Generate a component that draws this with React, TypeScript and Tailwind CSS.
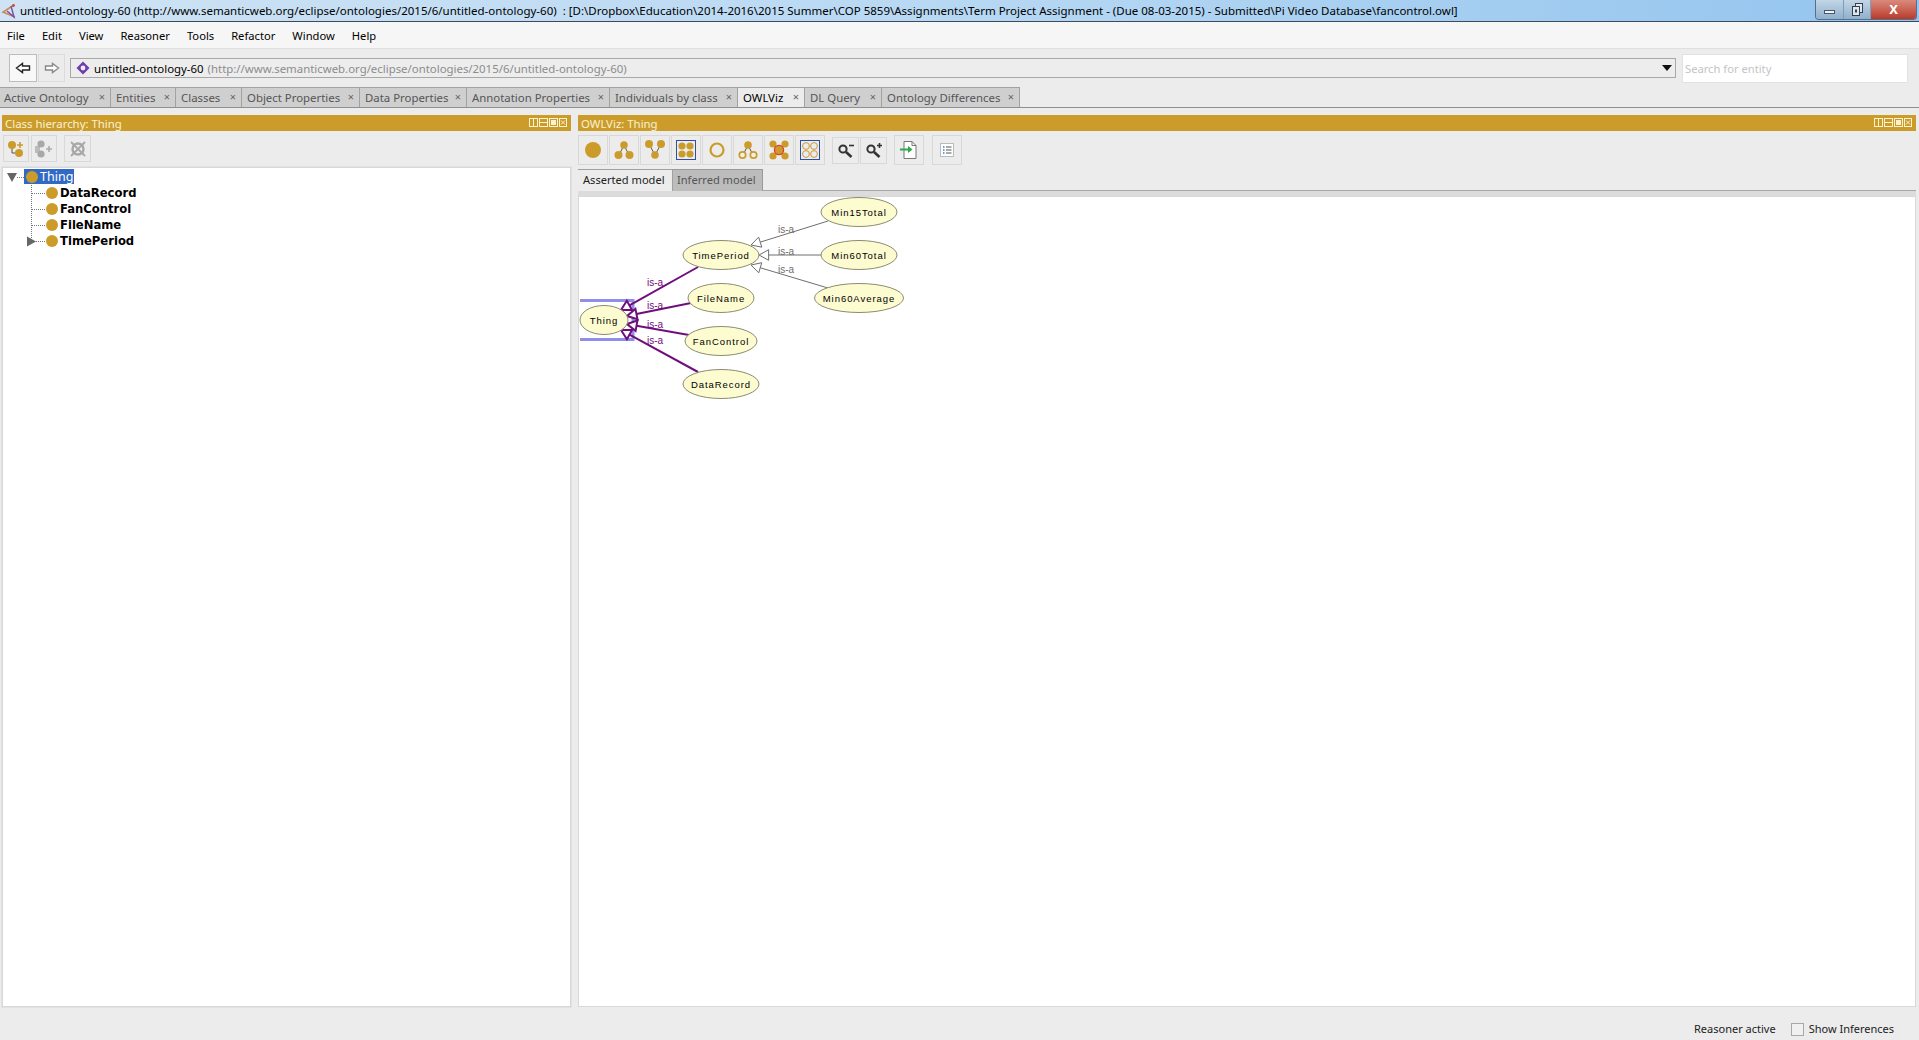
import type { ReactNode } from 'react';

const GOLD = '#cc9c2b';

const menus = ['File', 'Edit', 'View', 'Reasoner', 'Tools', 'Refactor', 'Window', 'Help'];

const tabs = [
  { label: 'Active Ontology', width: 'w-[111px]' },
  { label: 'Entities', width: 'w-[65px]' },
  { label: 'Classes', width: 'w-[66px]' },
  { label: 'Object Properties', width: 'w-[118px]' },
  { label: 'Data Properties', width: 'w-[107px]' },
  { label: 'Annotation Properties', width: 'w-[143px]' },
  { label: 'Individuals by class', width: 'w-[128px]' },
  { label: 'OWLViz', width: 'w-[67px]', active: true },
  { label: 'DL Query', width: 'w-[77px]' },
  { label: 'Ontology Differences', width: 'w-[138px]' },
];

function PanelButtons() {
  return (
    <svg width="38" height="10" viewBox="0 0 38 10" fill="none" stroke="#fdf3d0" strokeWidth="1">
      <rect x="0.5" y="0.5" width="8" height="8" />
      <path d="M4.5 0.5V8.5" />
      <rect x="10.5" y="0.5" width="8" height="8" />
      <path d="M10.5 4.5H18.5" />
      <rect x="20.5" y="0.5" width="8" height="8" />
      <rect x="22.5" y="2.5" width="4" height="4" fill="#fdf3d0" />
      <rect x="30.5" y="0.5" width="7" height="8" />
      <path d="M32 2.5L36 6.5M36 2.5L32 6.5" />
    </svg>
  );
}

function PanelHeader({ title }: { title: string }) {
  return (
    <div className="h-[16px] flex items-center justify-between pl-[3px] pr-[4px] bg-[#cc9c2b] text-[11.4px] text-[#fbf1d3]">
      <span className="pt-[1px]">{title}</span>
      <PanelButtons />
    </div>
  );
}

function ToolButton({ children, className }: { children: ReactNode; className: string }) {
  return (
    <div className={`flex items-center justify-center border border-[#d8d8d8] ${className}`}>{children}</div>
  );
}

function Icon({ children }: { children: ReactNode }) {
  return (
    <svg width="22" height="22" viewBox="0 0 22 22">
      {children}
    </svg>
  );
}

function Magnifier({ plus }: { plus?: boolean }) {
  return (
    <svg width="20" height="20" viewBox="0 0 20 20" fill="none" stroke="#333">
      <circle cx="7" cy="9" r="3.6" strokeWidth="2" />
      <path d="M10 12L15.5 17" strokeWidth="2.6" />
      {plus ? <path d="M13 5.5H18M15.5 3V8" strokeWidth="1.6" /> : <path d="M13 5.5H18" strokeWidth="1.6" />}
    </svg>
  );
}

function GraphToolbar() {
  return (
    <div className="h-[30px] flex items-center">
      <div className="flex gap-[1px]">
        <ToolButton className="w-[30px] h-[30px]">
          <Icon>
            <circle cx="11" cy="11" r="8" fill={GOLD} />
          </Icon>
        </ToolButton>
        <ToolButton className="w-[30px] h-[30px]">
          <Icon>
            <path d="M11 6L6 16M11 6L16 16" stroke="#555" fill="none" />
            <circle cx="11" cy="6" r="3.8" fill={GOLD} />
            <circle cx="5.5" cy="16" r="4" fill={GOLD} />
            <circle cx="16.5" cy="16" r="4" fill={GOLD} />
          </Icon>
        </ToolButton>
        <ToolButton className="w-[30px] h-[30px]">
          <Icon>
            <path d="M5 5L11 16L17 5" stroke="#555" fill="none" />
            <circle cx="5" cy="5" r="4" fill={GOLD} />
            <circle cx="17" cy="5" r="4" fill={GOLD} />
            <circle cx="11" cy="16" r="3.8" fill={GOLD} />
          </Icon>
        </ToolButton>
        <ToolButton className="w-[30px] h-[30px]">
          <svg width="20" height="20" viewBox="0 0 20 20">
            <rect x="0.5" y="0.5" width="19" height="19" fill="none" stroke="#2f4f9f" />
            <g fill={GOLD}>
              <circle cx="6" cy="6" r="3.6" />
              <circle cx="14" cy="6" r="3.6" />
              <circle cx="6" cy="14" r="3.6" />
              <circle cx="14" cy="14" r="3.6" />
            </g>
          </svg>
        </ToolButton>
        <ToolButton className="w-[30px] h-[30px]">
          <Icon>
            <circle cx="11" cy="11" r="6.5" fill="none" stroke={GOLD} strokeWidth="2.2" />
          </Icon>
        </ToolButton>
        <ToolButton className="w-[30px] h-[30px]">
          <Icon>
            <path d="M11 6L6 16M11 6L16 16" stroke="#555" fill="none" />
            <circle cx="11" cy="6" r="3.8" fill={GOLD} />
            <circle cx="5.5" cy="16" r="3.2" fill="#f0f0f0" stroke={GOLD} strokeWidth="1.7" />
            <circle cx="16.5" cy="16" r="3.2" fill="#f0f0f0" stroke={GOLD} strokeWidth="1.7" />
          </Icon>
        </ToolButton>
        <ToolButton className="w-[30px] h-[30px]">
          <Icon>
            <g fill={GOLD}>
              <circle cx="5" cy="5" r="3.6" />
              <circle cx="17" cy="5" r="3.6" />
              <circle cx="5" cy="17" r="3.6" />
              <circle cx="17" cy="17" r="3.6" />
            </g>
            <circle cx="11" cy="11" r="4.6" fill={GOLD} stroke="#e03b2e" strokeWidth="1.3" />
          </Icon>
        </ToolButton>
        <ToolButton className="w-[30px] h-[30px]">
          <svg width="20" height="20" viewBox="0 0 20 20">
            <rect x="0.5" y="0.5" width="19" height="19" fill="none" stroke="#2f4f9f" />
            <g fill="none" stroke={GOLD} strokeWidth="1">
              <circle cx="6" cy="6" r="3.4" />
              <circle cx="14" cy="6" r="3.4" />
              <circle cx="6" cy="14" r="3.4" />
              <circle cx="14" cy="14" r="3.4" />
            </g>
          </svg>
        </ToolButton>
      </div>
      <div className="flex gap-[1px] ml-[7px]">
        <ToolButton className="w-[27px] h-[27px]">
          <Magnifier />
        </ToolButton>
        <ToolButton className="w-[27px] h-[27px]">
          <Magnifier plus />
        </ToolButton>
      </div>
      <ToolButton className="w-[30px] h-[30px] ml-[7px]">
        <svg width="22" height="22" viewBox="0 0 22 22" fill="none">
          <path d="M6 2.5H14L18 6.5V19.5H6Z" fill="#fff" stroke="#777" />
          <path d="M14 2.5V6.5H18" stroke="#777" />
          <path d="M2 10.5H11" stroke="#2da84a" strokeWidth="2" />
          <path d="M10 7L14.5 10.5L10 14Z" fill="#2da84a" />
        </svg>
      </ToolButton>
      <ToolButton className="w-[30px] h-[30px] ml-[8px]">
        <svg width="18" height="18" viewBox="0 0 18 18" fill="none">
          <rect x="2.5" y="2.5" width="13" height="13" fill="#fff" stroke="#bbb" />
          <path d="M5 6H6.5M5 9H6.5M5 12H6.5" stroke="#3b82c4" strokeWidth="1.4" />
          <path d="M8 6H13.5M8 9H13.5M8 12H13.5" stroke="#555" strokeWidth="1.2" />
        </svg>
      </ToolButton>
    </div>
  );
}

function Node({ x, y, rx, label }: { x: number; y: number; rx: number; label: string }) {
  return (
    <g>
      <ellipse cx={x} cy={y} rx={rx} ry={14.5} fill="#fdfbd0" stroke="#8c8c70" />
      <text x={x} y={y + 3.5} textAnchor="middle" fontSize="9.5" letterSpacing="0.95" fill="#000">
        {label}
      </text>
    </g>
  );
}

function Arrow({ x1, y1, x2, y2, color, width }: { x1: number; y1: number; x2: number; y2: number; color: string; width: number }) {
  // open triangle head with its tip on (x2, y2)
  const a = Math.atan2(y1 - y2, x1 - x2);
  const len = 11;
  const b = { x: x2 + Math.cos(a - 0.5) * len, y: y2 + Math.sin(a - 0.5) * len };
  const c = { x: x2 + Math.cos(a + 0.5) * len, y: y2 + Math.sin(a + 0.5) * len };
  const m = { x: x2 + Math.cos(a) * len * 0.88, y: y2 + Math.sin(a) * len * 0.88 };
  return (
    <g>
      <line x1={x1} y1={y1} x2={m.x} y2={m.y} stroke={color} strokeWidth={width} />
      <polygon points={`${x2},${y2} ${b.x},${b.y} ${c.x},${c.y}`} fill="#fff" stroke={color} strokeWidth={width} />
    </g>
  );
}

function IsA({ x, y, color }: { x: number; y: number; color: string }) {
  return (
    <text x={x} y={y} fontSize="10" fill={color}>
      is-a
    </text>
  );
}

function Graph() {
  const purple = '#6f0f7c';
  const grey = '#6e6e6e';
  return (
    <svg width="400" height="220" viewBox="579 197 400 220" style={{ fontFamily: '"Liberation Sans", Arial, sans-serif' }}>
      <path d="M580 300.5H633V339.5H580" fill="none" stroke="#8f8fe8" strokeWidth="3" />
      <Arrow x1={698} y1={267} x2={621} y2={310} color={purple} width={2} />
      <Arrow x1={691} y1={303} x2={627} y2={316} color={purple} width={2} />
      <Arrow x1={689} y1={335} x2={627} y2={324} color={purple} width={2} />
      <Arrow x1={698} y1={372} x2={621} y2={330} color={purple} width={2} />
      <Arrow x1={828} y1={221} x2={751} y2={245} color={grey} width={1} />
      <Arrow x1={821} y1={255} x2={759} y2={255} color={grey} width={1} />
      <Arrow x1={828} y1={288} x2={751} y2={265} color={grey} width={1} />
      <IsA x={647} y={286} color={purple} />
      <IsA x={647} y={309} color={purple} />
      <IsA x={647} y={328} color={purple} />
      <IsA x={647} y={344} color={purple} />
      <IsA x={778} y={233} color={grey} />
      <IsA x={778} y={255} color={grey} />
      <IsA x={778} y={273} color={grey} />
      <Node x={604} y={320} rx={24} label="Thing" />
      <Node x={721} y={255} rx={38} label="TimePeriod" />
      <Node x={721} y={298} rx={33} label="FileName" />
      <Node x={721} y={341} rx={36} label="FanControl" />
      <Node x={721} y={384} rx={38} label="DataRecord" />
      <Node x={859} y={212} rx={38} label="Min15Total" />
      <Node x={859} y={255} rx={38} label="Min60Total" />
      <Node x={859} y={298} rx={44.5} label="Min60Average" />
    </svg>
  );
}

function TreeRow({ label, last, expandable }: { label: string; last?: boolean; expandable?: boolean }) {
  return (
    <div className="h-[16px] flex items-center">
      <svg width="57" height="16" viewBox="3 0 57 16" fill="none">
        <path d={last ? 'M31.5 0V8' : 'M31.5 0V16'} stroke="#777" strokeDasharray="1 1" />
        <path d="M32 8.5H46" stroke="#777" strokeDasharray="1 1" />
        {expandable && <path d="M27 3.5L36 8.5L27 13.5Z" fill="#666" />}
        <circle cx="52" cy="8" r="6" fill={GOLD} />
      </svg>
      <span className="pt-[1px] text-[11.6px] font-bold text-black font-['DejaVu_Sans',sans-serif]">{label}</span>
    </div>
  );
}

function ClassTree() {
  return (
    <div className="pt-[1px]">
      <div className="h-[16px] flex items-center">
        <svg width="37" height="16" viewBox="3 0 37 16" fill="none">
          <path d="M7 4H17L12 13Z" fill="#666" />
          <path d="M17 8.5H24" stroke="#777" strokeDasharray="1 1" />
          <rect x="24" y="0" width="16" height="15" fill="#316ac5" />
          <circle cx="32" cy="8" r="6" fill={GOLD} />
        </svg>
        <span className="h-[15px] mt-[-1px] pr-[1px] leading-[15px] bg-[#316ac5] text-white text-[12.5px]">Thing</span>
      </div>
      <TreeRow label="DataRecord" />
      <TreeRow label="FanControl" />
      <TreeRow label="FileName" />
      <TreeRow label="TimePeriod" last expandable />
    </div>
  );
}

export default function App() {
  return (
    <div className="w-[1919px] h-[1040px] overflow-hidden flex flex-col bg-[#ececec] font-['Noto_Sans',sans-serif] text-[11.5px] text-[#222]">
      {/* window title */}
      <div className="h-[22px] shrink-0 flex items-center justify-between border-b border-[#3b4a5c] bg-gradient-to-r from-[#cfe3f4] via-[#b7d8f3] to-[#93c4ee]">
        <div className="flex items-center">
          <svg width="16" height="18" viewBox="0 0 16 18" fill="none" className="ml-[1px]">
            <path d="M13 3L2 10L14 15" stroke="#c98a5a" strokeWidth="1.6" />
            <path d="M10 4L13 15L6 9" stroke="#7a4fa0" strokeWidth="1.4" />
            <circle cx="12.5" cy="3.5" r="1.4" fill="#c0503c" />
          </svg>
          <span className="ml-[3px] pt-[1px] text-[11.5px] text-black whitespace-nowrap">
            untitled-ontology-60 (http://www.semanticweb.org/eclipse/ontologies/2015/6/untitled-ontology-60) &nbsp;: [D:\Dropbox\Education\2014-2016\2015 Summer\COP 5859\Assignments\Term Project Assignment - (Due 08-03-2015) - Submitted\Pi Video Database\fancontrol.owl]
          </span>
        </div>
        <div className="flex h-[20px] self-start mr-[2px] rounded-b-[4px] overflow-hidden border border-t-0 border-[#55708c]">
          <div className="w-[28px] flex items-center justify-center bg-gradient-to-b from-[#c3d6e6] to-[#8fb0cc] border-r border-[#7f9cb8]">
            <div className="w-[11px] h-[4px] mt-[5px] bg-[#f2f2f2] border border-[#46586b]" />
          </div>
          <div className="w-[27px] flex items-center justify-center bg-gradient-to-b from-[#c3d6e6] to-[#8fb0cc] border-r border-[#7f9cb8]">
            <svg width="11" height="13" viewBox="0 0 11 13" fill="none" stroke="#33414f">
              <rect x="3.5" y="0.5" width="7" height="9" fill="#dfe8f0" />
              <rect x="0.5" y="3.5" width="7" height="9" fill="#dfe8f0" />
              <rect x="3" y="6.5" width="2" height="3" fill="#33414f" stroke="none" />
            </svg>
          </div>
          <div className="w-[45px] flex items-center justify-center bg-gradient-to-b from-[#d98a7c] to-[#b8382a] text-white text-[13px] font-bold">
            X
          </div>
        </div>
      </div>

      {/* menu */}
      <div className="h-[27px] shrink-0 flex items-center gap-[17px] pl-[7px] pt-[2px] bg-[#f6f6f6] border-b border-[#dfdfdf]">
        {menus.map((m) => (
          <span key={m} className="text-[11.2px] text-black">
            {m}
          </span>
        ))}
      </div>

      {/* ontology address row */}
      <div className="h-[38px] shrink-0 flex items-center pl-[9px]">
        <div className="w-[28px] h-[28px] flex items-center justify-center bg-[#f8f8f8] border border-[#bdbdbd]">
          <svg width="16" height="12" viewBox="0 0 16 12" fill="none">
            <path d="M1.5 6L7.5 1.5V4H14.5V8H7.5V10.5Z" fill="#fff" stroke="#222" strokeWidth="1.4" />
          </svg>
        </div>
        <div className="w-[27px] h-[28px] ml-[1px] flex items-center justify-center border border-[#dcdcdc]">
          <svg width="16" height="12" viewBox="0 0 16 12" fill="none">
            <path d="M14.5 6L8.5 1.5V4H1.5V8H8.5V10.5Z" fill="#fff" stroke="#888" strokeWidth="1.4" />
          </svg>
        </div>
        <div className="w-[1606px] h-[20px] ml-[5px] flex items-center justify-between border border-[#a8a8a8] bg-[#ededed]">
          <div className="flex items-center whitespace-nowrap">
            <svg width="14" height="14" viewBox="0 0 14 14" className="ml-[5px]">
              <path d="M7 0.5L13.5 7L7 13.5L0.5 7Z" fill="#6d3fa8" />
              <circle cx="7" cy="7" r="2.4" fill="#f0e8ff" />
            </svg>
            <span className="ml-[4px] pt-[2px] text-[11.4px] text-black">untitled-ontology-60</span>
            <span className="ml-[4px] pt-[2px] text-[11.4px] text-[#8c8c8c]">
              (http://www.semanticweb.org/eclipse/ontologies/2015/6/untitled-ontology-60)
            </span>
          </div>
          <svg width="10" height="6" viewBox="0 0 10 6" className="mr-[3px]">
            <path d="M0 0H10L5 6Z" fill="#111" />
          </svg>
        </div>
        <div className="w-[226px] h-[29px] ml-[6px] flex items-center pl-[2px] pt-[2px] bg-white border border-[#e2e2e2] text-[11.2px] text-[#c4c4c4]">
          Search for entity
        </div>
      </div>

      {/* workspace tabs */}
      <div className="h-[21px] shrink-0 flex border-b border-[#8f8f8f]">
        {tabs.map((t) => (
          <div
            key={t.label}
            className={`${t.width} h-[20px] flex items-center justify-between pl-[5px] first:pl-[4px] pr-[5px] border-t border-r border-[#a2a2a2] whitespace-nowrap text-[11.4px] ${t.active ? 'bg-[#ececec] text-black' : 'bg-[#cfcfcf] text-[#555]'}`}
          >
            <span>{t.label}</span>
            <span className="text-[#666] text-[11px]">×</span>
          </div>
        ))}
      </div>

      {/* views */}
      <div className="h-[899px] shrink-0 flex pt-[7px] pl-[2px] gap-[7px]">
        <div className="w-[569px] flex flex-col">
          <PanelHeader title="Class hierarchy: Thing" />
          <div className="h-[36px] flex items-center gap-[2px] pl-[1px] border-b border-[#dcdcdc]">
            <ToolButton className="w-[26px] h-[27px] border-[#b8b8b8]">
              <svg width="20" height="20" viewBox="0 0 20 20" fill="none">
                <path d="M6 6V14H12" stroke="#555" />
                <circle cx="6" cy="6" r="4" fill={GOLD} />
                <circle cx="13" cy="14" r="4" fill={GOLD} />
                <path d="M11 6H17M14 3V9" stroke={GOLD} strokeWidth="1.6" />
              </svg>
            </ToolButton>
            <ToolButton className="w-[26px] h-[27px]">
              <svg width="20" height="20" viewBox="0 0 20 20" fill="none">
                <rect x="1" y="7" width="5" height="7" fill="#bbb" />
                <circle cx="7" cy="5" r="3.6" fill="#a8a8a8" />
                <circle cx="7" cy="15" r="3.6" fill="#a8a8a8" />
                <path d="M12 10H18M15 7V13" stroke="#aaa" strokeWidth="1.6" />
              </svg>
            </ToolButton>
            <ToolButton className="w-[27px] h-[27px] ml-[5px]">
              <svg width="20" height="20" viewBox="0 0 20 20" fill="none">
                <circle cx="10" cy="10" r="5.5" stroke="#a8a8a8" strokeWidth="2.4" />
                <path d="M3 3L17 17M17 3L3 17" stroke="#a8a8a8" strokeWidth="1.8" />
              </svg>
            </ToolButton>
          </div>
          <div className="flex-1 bg-white border border-[#d8d8d8] outline outline-1 outline-[#e2e2e2]">
            <ClassTree />
          </div>
        </div>

        <div className="w-[1338px] flex flex-col">
          <PanelHeader title="OWLViz: Thing" />
          <div className="pt-[4px]">
            <GraphToolbar />
          </div>
          <div className="flex h-[22px] mt-[4px] text-[11.1px] whitespace-nowrap">
            <div className="w-[95px] flex items-center pl-[5px] bg-[#ececec] border-t border-r border-[#a0a0a0] text-[#222]">
              Asserted model
            </div>
            <div className="w-[90px] flex items-center pl-[4px] bg-[#bcbcbc] border-t border-r border-[#999] text-[#555]">
              Inferred model
            </div>
            <div className="flex-1 border-b border-[#a8a8a8]" />
          </div>
          <div className="h-[5px] bg-[#dcdcdc]" />
          <div className="flex-1 bg-white border border-[#d8d8d8] overflow-hidden">
            <Graph />
          </div>
        </div>
      </div>

      {/* status bar */}
      <div className="flex-1 flex items-center justify-end pr-[25px] pt-[12px] text-[11px] text-[#222]">
        <span>Reasoner active</span>
        <span className="w-[13px] h-[13px] ml-[15px] border border-[#a8a8a8] bg-[#f0f0f0]" />
        <span className="ml-[5px]">Show Inferences</span>
      </div>
    </div>
  );
}
